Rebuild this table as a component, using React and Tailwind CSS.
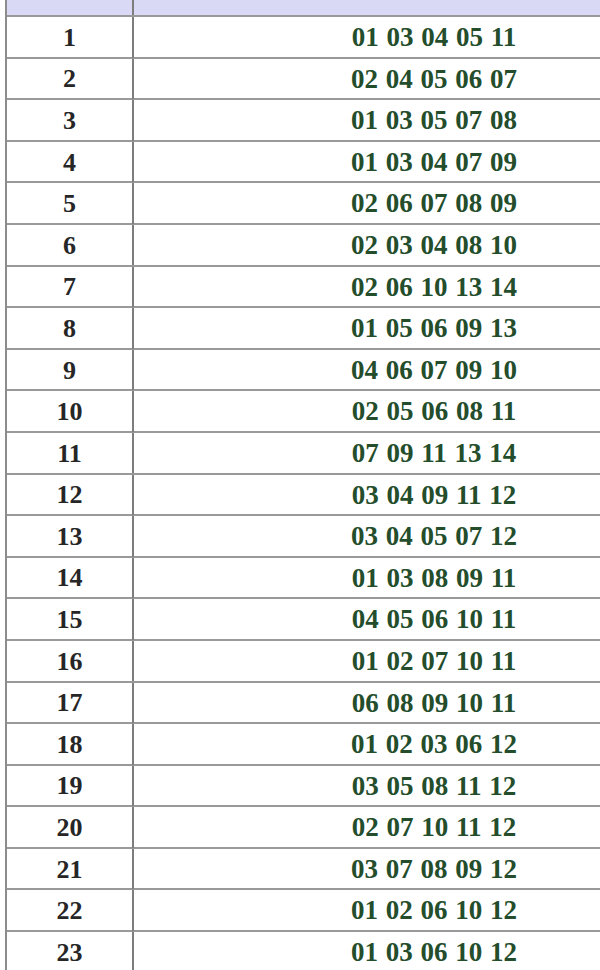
import React from 'react';

const rows = [
  '01 03 04 05 11',
  '02 04 05 06 07',
  '01 03 05 07 08',
  '01 03 04 07 09',
  '02 06 07 08 09',
  '02 03 04 08 10',
  '02 06 10 13 14',
  '01 05 06 09 13',
  '04 06 07 09 10',
  '02 05 06 08 11',
  '07 09 11 13 14',
  '03 04 09 11 12',
  '03 04 05 07 12',
  '01 03 08 09 11',
  '04 05 06 10 11',
  '01 02 07 10 11',
  '06 08 09 10 11',
  '01 02 03 06 12',
  '03 05 08 11 12',
  '02 07 10 11 12',
  '03 07 08 09 12',
  '01 02 06 10 12',
  '01 03 06 10 12',
];

const App = () => {
  return (
    <div className="w-[600px] h-[970px] overflow-hidden bg-white" style={{ fontFamily: '"Liberation Serif", "DejaVu Serif", serif' }}>
      <div className="ml-[5px] w-[729px] border-l-2 border-[#8c8c8c]">
        {/* header strip */}
        <div className="grid grid-cols-[127px_1fr] h-[15px] bg-[#d9d9f6]">
          <div className="border-r-2 border-[#7d7d7d]" />
          <div />
        </div>

        {rows.map((nums, i) => (
          <div
            key={i}
            className="grid grid-cols-[127px_1fr] h-[41.6px] border-t-2 border-[#999999]"
          >
            <div className="flex items-center justify-center border-r-2 border-[#7d7d7d] text-[26px] font-bold text-[#262626]">
              {i + 1}
            </div>
            <div className="flex items-center justify-center text-[27px] font-bold text-[#244d2c] [word-spacing:1px]">
              {nums}
            </div>
          </div>
        ))}
      </div>
    </div>
  );
};

export default App;
